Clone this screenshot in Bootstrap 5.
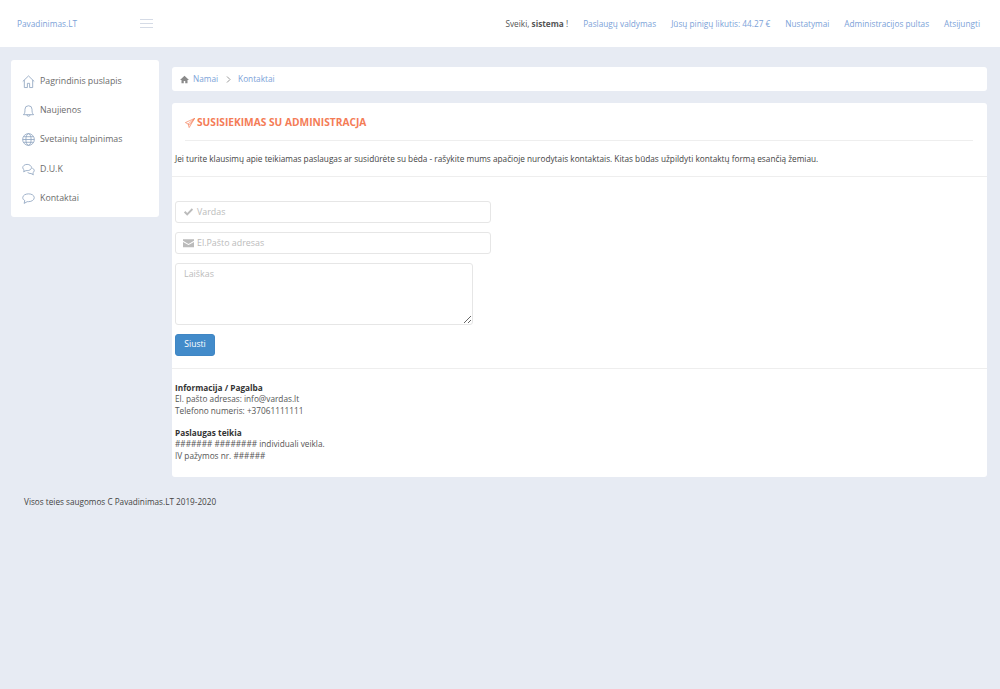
<!DOCTYPE html>
<html lang="lt">
<head>
<meta charset="utf-8">
<title>Kontaktai</title>
<link rel="stylesheet" href="https://cdn.jsdelivr.net/npm/bootstrap@5.3.0/dist/css/bootstrap.min.css">
<style>
html,body{height:100%}
body{background:#e7ebf3;font-family:"Open Sans",sans-serif;font-size:8.25px;color:#555;line-height:11.3px}
a{color:#7ba2d8;text-decoration:none}
.topbar{height:47px;background:#fff;padding:0 20px 0 17px}
.brand-link{width:123px;font-size:8.3px}
.burger{width:13px;height:9px;border-top:1px solid #d5dbe6;border-bottom:1px solid #d5dbe6;position:relative}
.burger::after{content:"";display:block;height:1px;background:#d5dbe6;margin-top:3px}
.topnav{gap:15px;font-size:8.25px}
.page-wrap{padding:13px 13px 0 11px;gap:13px}
.side-box{width:148px;height:157px;background:#fff;border-radius:3px;flex:none;padding:7px 11px 5px}
.side-item{height:29.2px;gap:5px;color:#6b6b6b;font-size:8.8px}
.side-item svg{width:13px;height:15px;flex:none;stroke:#8ea4bf;fill:none;stroke-width:.9}
.main-col{flex:1;padding-top:7px;min-width:0}
.crumb-box{height:24px;background:#fff;border-radius:3px;padding:0 8px;margin-bottom:12px;gap:4px;font-size:8.25px}
.crumb-box svg.home-ico{width:9px;height:9px;fill:#8a8a8a}
.crumb-box svg.sep-ico{width:5px;height:7px;stroke:#999;fill:none;margin:0 3px 0 4px}
.content-box{height:374px;background:#fff;border-radius:3px}
.title-row{margin:0 14px 0 13px;height:38px;border-bottom:1px solid #eee;color:#f47c56;font-weight:700;font-size:10.2px;gap:2px;padding-top:2px}
.title-row svg{width:10px;height:10px;stroke:#f47c56;fill:none;stroke-width:.8}
.lead-text{height:36px;padding:12px 3px 0;border-bottom:1px solid #eee;color:#444;font-size:8.25px}
.form-area{padding:24px 3px 0}
.field-box{width:316px;height:22px;border:1px solid #e6e6e6;border-radius:3px;margin-bottom:9px;padding:0 7px;gap:3px;color:#bbb;font-size:8.9px}
.field-box svg{width:11px;height:10px;fill:#bbb;flex:none}
.msg-box{width:298px;height:62px;border:1px solid #e6e6e6;border-radius:3px;padding:4px 8px;display:block;resize:vertical;font-size:8.9px;color:#444;outline:0;margin-bottom:9px}
.msg-box::placeholder{color:#bbb}
.send-btn{width:40px;height:22px;padding:0;background:#428bca;border:1px solid #3f86c4;border-radius:3px;color:#fff;font-size:8.6px}
.info-rule{margin:12px 0 13px;border-top:1px solid #eee}
.info-block{padding:0 3px;color:#555}
.info-block b{color:#333}
.foot-text{padding:19px 0 0 24px;color:#444;font-size:8.2px}
</style>
</head>
<body>
<nav class="topbar d-flex align-items-center justify-content-between">
  <div class="d-flex align-items-center">
    <a class="brand-link" href="#">Pavadinimas.LT</a>
    <span class="burger"></span>
  </div>
  <div class="topnav d-flex align-items-center">
    <span>Sveiki, <b>sistema</b> !</span>
    <a href="#">Paslaugų valdymas</a>
    <a href="#">Jūsų pinigų likutis: 44.27 €</a>
    <a href="#">Nustatymai</a>
    <a href="#">Administracijos pultas</a>
    <a href="#">Atsijungti</a>
  </div>
</nav>
<div class="page-wrap d-flex align-items-start">
  <aside class="side-box">
    <div class="side-item d-flex align-items-center"><svg viewBox="0 0 14 15"><path d="M.8 7.500 7 1.500l6.200 6M2.500 6v8h3.300V9.500h2.400V14h3.300V6"/></svg>Pagrindinis puslapis</div>
    <div class="side-item d-flex align-items-center"><svg viewBox="0 0 14 15"><path d="M1.500 12c1.700-1.200 1.700-3.500 1.700-5.800a3.800 3.800 0 0 1 7.600 0c0 2.300 0 4.600 1.700 5.800zM5.300 12a1.700 1.700 0 0 0 3.400 0"/></svg>Naujienos</div>
    <div class="side-item d-flex align-items-center"><svg viewBox="0 0 14 14"><circle cx="7" cy="7" r="6.300"/><ellipse cx="7" cy="7" rx="2.800" ry="6.300"/><path d="M.7 7h12.600M1.700 4h10.600M1.700 10h10.600"/></svg>Svetainių talpinimas</div>
    <div class="side-item d-flex align-items-center"><svg viewBox="0 0 14 14"><path d="M5.500 1.500C3 1.500.8 3 .8 5c0 1 .6 1.900 1.500 2.400L1.800 9.500l2.500-1.300h1.200C8 8.200 10.200 7 10.200 5S8 1.500 5.500 1.500z"/><path d="M11 5.500c1.300.6 2.200 1.500 2.200 2.700 0 1-.6 1.800-1.500 2.300l.5 2.200-2.500-1.400c-1.500.1-3-.4-3.700-1.400"/></svg>D.U.K</div>
    <div class="side-item d-flex align-items-center"><svg viewBox="0 0 14 14"><path d="M7 2C3.500 2 .8 3.800 .8 6.100c0 1.300.8 2.400 2.200 3.100L2.300 12.300l3.300-1.900H7c3.500 0 6.200-1.900 6.200-4.300S10.500 2 7 2z"/></svg>Kontaktai</div>
  </aside>
  <main class="main-col">
    <div class="crumb-box d-flex align-items-center">
      <svg class="home-ico" viewBox="0 0 12 12"><path d="M6 1 0 6.500h2V11h3V8h2v3h3V6.500h2z"/></svg>
      <a href="#">Namai</a><svg class="sep-ico" viewBox="0 0 5 7"><path d="M1 .5 4 3.500 1 6.500"/></svg><a href="#">Kontaktai</a>
    </div>
    <section class="content-box">
      <div class="title-row d-flex align-items-center">
        <svg viewBox="0 0 12 12"><path d="M11.500.5.500 5.500l3.300 1.700L5 11.500 11.500.5zM3.800 7.200 11.500.5 5.500 8.300z"/></svg>
        SUSISIEKIMAS SU ADMINISTRACJA
      </div>
      <div class="lead-text">Jei turite klausimų apie teikiamas paslaugas ar susidūrėte su bėda - rašykite mums apačioje nurodytais kontaktais. Kitas būdas užpildyti kontaktų formą esančią žemiau.</div>
      <div class="form-area">
        <div class="field-box d-flex align-items-center"><svg viewBox="0 0 12 10"><path d="M1 5.500 2.600 4l2 2L9.600 1 11 2.500 4.600 9z"/></svg>Vardas</div>
        <div class="field-box d-flex align-items-center"><svg viewBox="0 0 12 10"><path d="M0 1h12v1.500L6 6 0 2.500zM0 3.800 6 7.300l6-3.500V9.500H0z"/></svg>El.Pašto adresas</div>
        <textarea class="msg-box" placeholder="Laiškas"></textarea>
        <button class="send-btn" type="button">Siusti</button>
      </div>
      <div class="info-rule"></div>
      <div class="info-block">
        <b>Informacija / Pagalba</b><br>
        El. pašto adresas: info@vardas.lt<br>
        Telefono numeris: +37061111111<br><br>
        <b>Paslaugas teikia</b><br>
        ####### ######## individuali veikla.<br>
        IV pažymos nr. ######
      </div>
    </section>
  </main>
</div>
<div class="foot-text">Visos teies saugomos C Pavadinimas.LT 2019-2020</div>
<script src="https://cdn.jsdelivr.net/npm/bootstrap@5.3.0/dist/js/bootstrap.bundle.min.js"></script>
</body>
</html>
